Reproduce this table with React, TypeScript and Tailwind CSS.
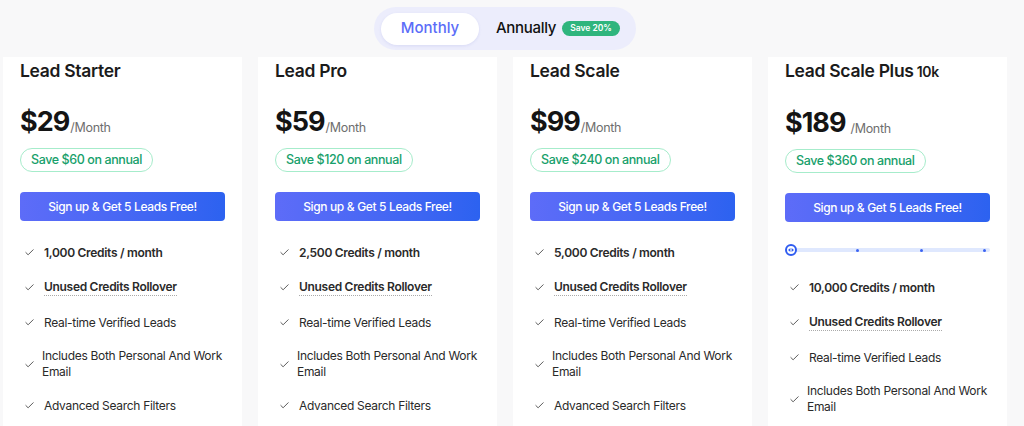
import { Check } from 'lucide-react'

const FONT = { fontFamily: 'Inter, "Noto Sans", sans-serif' }

interface Plan {
  name: string
  suffix?: string
  price: string
  gap?: boolean
  save: string
  credits: string
  slider?: boolean
}

const PLANS: Plan[] = [
  { name: 'Lead Starter', price: '$29', save: 'Save $60 on annual', credits: '1,000 Credits / month' },
  { name: 'Lead Pro', price: '$59', save: 'Save $120 on annual', credits: '2,500 Credits / month' },
  { name: 'Lead Scale', price: '$99', save: 'Save $240 on annual', credits: '5,000 Credits / month' },
  {
    name: 'Lead Scale Plus',
    suffix: '10k',
    price: '$189',
    gap: true,
    save: 'Save $360 on annual',
    credits: '10,000 Credits / month',
    slider: true,
  },
]

function Tick() {
  return <Check size={11} strokeWidth={1.75} className="shrink-0 text-[#333]" aria-hidden="true" />
}

function Slider() {
  return (
    <div className="relative mt-[22px] mb-[2px] h-3 w-[205px]">
      <div className="absolute top-[4px] left-[6px] right-0 h-[4px] rounded-full bg-[#dfe8fe]" />
      {[71, 135, 198].map((x) => (
        <span
          key={x}
          className="absolute top-[4.5px] h-[3px] w-[3px] rounded-full bg-[#3b63f2]"
          style={{ left: x }}
        />
      ))}
      <div className="absolute top-0 left-0 flex h-3 w-3 items-center justify-center rounded-full border-2 border-[#2f5cf0] bg-white">
        <svg width="6" height="4" viewBox="0 0 6 4" aria-hidden="true">
          <path d="M2.4 0 L0 2 L2.4 4 Z M3.6 0 L6 2 L3.6 4 Z" fill="#2f5cf0" />
        </svg>
      </div>
    </div>
  )
}

function Card({ plan }: { plan: Plan }) {
  return (
    <div className="h-[380px] w-[239px] shrink-0 bg-white px-[17px] pt-0">
      <h2 className="text-[17.5px] leading-[28px] font-semibold tracking-[-0.3px] text-[#1b1b1b]">
        {plan.name}
        {plan.suffix && <span className="ml-[3px] text-[14px] font-semibold">{plan.suffix}</span>}
      </h2>
      <div className="mt-[20px] flex h-[34px] items-end">
        <span className="text-[27px] leading-[34px] font-bold tracking-[-1px] text-[#141414]">
          {plan.price}
        </span>
        <span
          className={`mb-[1px] text-[12.5px] tracking-[-0.3px] text-[#6e6e6e] ${plan.gap ? 'ml-[5px]' : 'ml-[1px]'}`}
        >
          /Month
        </span>
      </div>
      <div className="mt-[9px] inline-flex h-[24px] items-center rounded-full border border-[#a6eccb] px-[10px] text-[12.5px] font-medium tracking-[-0.4px] text-[#17a06b]">
        {plan.save}
      </div>
      <button
        type="button"
        className="mt-[20px] block h-[29px] w-[205px] rounded-[4px] bg-gradient-to-r from-[#5d6cf8] to-[#2c62f0] text-[12px] font-medium tracking-[-0.35px] text-white"
      >
        Sign up &amp; Get 5 Leads Free!
      </button>
      {plan.slider && <Slider />}
      <ul className="mt-[22px] space-y-[16px] pl-[4px] text-[12px] leading-[16px] tracking-[-0.3px] text-[#2a2a2a]">
        <li className="flex min-h-[19px] items-center gap-[9px]">
          <Tick />
          <span className="font-semibold">{plan.credits}</span>
        </li>
        <li className="flex min-h-[19px] items-center gap-[9px]">
          <Tick />
          <span className="border-b border-dotted border-[#aaa] font-semibold">Unused Credits Rollover</span>
        </li>
        <li className="flex min-h-[19px] items-center gap-[9px]">
          <Tick />
          <span>Real-time Verified Leads</span>
        </li>
        <li className="flex items-center gap-[7px]">
          <Tick />
          <span>Includes Both Personal And Work Email</span>
        </li>
        <li className="flex min-h-[19px] items-center gap-[9px]">
          <Tick />
          <span>Advanced Search Filters</span>
        </li>
      </ul>
    </div>
  )
}

export default function App() {
  return (
    <div className="h-[426px] w-[1024px] overflow-hidden bg-[#f8f8f9]" style={FONT}>
      <div className="pt-[7px]">
        <div className="ml-[374px] flex h-[43px] w-[262px] items-center rounded-full bg-[#ecedfc] px-[7px]">
          <div className="flex h-[32px] w-[98px] items-center justify-center rounded-full bg-white text-[15px] font-medium text-[#5b6df8] shadow-[0_1px_3px_rgba(80,90,200,0.12)]">
            Monthly
          </div>
          <span className="ml-[17px] text-[15px] font-medium tracking-[-0.3px] text-[#111]">Annually</span>
          <span className="ml-[6px] flex h-[15px] items-center rounded-full bg-[#2fb57d] px-[8px] text-[8.5px] font-semibold text-white">
            Save 20%
          </span>
        </div>
      </div>
      <div className="mt-[7px] flex gap-[16px] pl-[3px]">
        {PLANS.map((p) => (
          <Card key={p.name} plan={p} />
        ))}
      </div>
    </div>
  )
}
